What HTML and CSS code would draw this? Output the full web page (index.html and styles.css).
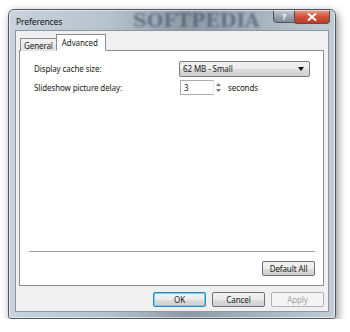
FILE: index.html
```html
<!DOCTYPE html>
<html lang="en">
<head>
<meta charset="UTF-8" />
<title>Preferences</title>
<link rel="stylesheet" href="styles.css">
</head>
<body>

<div class="window">
  <div class="titlebar">
    <span class="title">Preferences</span>
    <span class="watermark">SOFTPEDIA</span>
    <div class="caption-buttons">
      <span class="cap help">?</span>
      <span class="cap close">
        <svg width="10" height="8" viewBox="0 0 10 8"><path d="M1 0.5 L9 7.5 M9 0.5 L1 7.5" stroke="#fff" stroke-width="2"/></svg>
      </span>
    </div>
  </div>

  <div class="client">
    <div class="tabs">
      <span class="tab">General</span>
      <span class="tab active">Advanced</span>
    </div>

    <div class="panel">
      <div class="row">
        <span class="label">Display cache size:</span>
        <div class="combo">
          <span>62 MB - Small</span>
          <svg width="6" height="4" viewBox="0 0 6 4"><path d="M0 0 L6 0 L3 4 Z" fill="#111"/></svg>
        </div>
      </div>
      <div class="row">
        <span class="label">Slideshow picture delay:</span>
        <div class="spin">
          <span class="spin-input">3</span>
          <span class="spin-arrows">
            <svg width="7" height="15" viewBox="0 0 7 15"><path d="M1 6 L3.5 3 L6 6 Z M1 9 L3.5 12 L6 9 Z" fill="#777"/></svg>
          </span>
        </div>
        <span class="unit">seconds</span>
      </div>

      <div class="filler"></div>
      <div class="separator"></div>
      <div class="panel-actions">
        <span class="btn">Default All</span>
      </div>
    </div>

    <div class="dialog-actions">
      <span class="btn focused">OK</span>
      <span class="btn">Cancel</span>
      <span class="btn disabled">Apply</span>
    </div>
  </div>
</div>

</body>
</html>
```

FILE: styles.css
```css
body {
  margin: 0;
  background: #fff;
  font-family: "Noto Sans", Arial, sans-serif;
  font-size: 8px;
  letter-spacing: -0.1px;
  color: #1a1a1a;
}
.window {
  margin: 9px 0 0 8px;
  width: 328px;
  height: 310px;
  box-sizing: border-box;
  border: 1px solid #4e5862;
  border-radius: 6px 6px 3px 3px;
  background: linear-gradient(90deg, #c9d3dc 0%, #b6c2cd 30%, #8d9aa6 55%, #aab6c1 80%, #c2ccd5 100%);
  box-shadow: 2px 3px 8px rgba(0,0,0,0.45);
  display: flex;
  flex-direction: column;
  padding: 0 6px 6px 6px;
  position: relative;
}
.window::after {
  content: "";
  position: absolute;
  left: 0; right: 0; top: 0; bottom: 0;
  border: 1px solid rgba(255,255,255,0.55);
  border-radius: 5px 5px 2px 2px;
  pointer-events: none;
}
.titlebar {
  height: 20px;
  display: flex;
  align-items: center;
  position: relative;
}
.title {
  font-size: 8.5px;
  color: #111;
  padding-left: 1px;
  padding-top: 2px;
  position: relative;
  z-index: 1;
}
.watermark {
  position: absolute;
  left: 118px;
  top: -1px;
  font-family: "DejaVu Serif", serif;
  font-weight: bold;
  font-size: 19px;
  letter-spacing: 0;
  color: rgba(60,78,98,0.6);
  filter: blur(1.2px);
}
.caption-buttons {
  position: absolute;
  right: -1px;
  top: -1px;
  display: flex;
}
.cap {
  height: 14px;
  display: flex;
  align-items: center;
  justify-content: center;
  border: 1px solid #4a525a;
  box-sizing: border-box;
}
.help {
  width: 22px;
  border-radius: 0 0 0 4px;
  background: linear-gradient(#c8d0d8, #9aa6b2 50%, #7e8a96);
  color: #fff;
  font-weight: bold;
  font-size: 9px;
}
.close {
  width: 35px;
  height: 15px;
  border-left: none;
  border-radius: 0 0 4px 0;
  background: linear-gradient(#e8a090, #d0533c 50%, #c03a22);
}
.client {
  flex: 1;
  background: #f0f0f0;
  border: 1px solid #8b96a0;
  display: flex;
  flex-direction: column;
  padding: 3px 4px 4px 3px;
}
.tabs {
  display: flex;
  align-items: flex-end;
  height: 17px;
  margin-bottom: -1px;
  position: relative;
  z-index: 1;
}
.tab {
  border: 1px solid #898c95;
  border-bottom: none;
  background: linear-gradient(#f4f4f4, #e0e0e0);
  padding: 1px 3px 0 3px;
  height: 13px;
  box-sizing: border-box;
  line-height: 11px;
  margin-left: 1px;
}
.tab.active {
  background: #fff;
  height: 17px;
  padding: 2px 7px 0 5px;
  margin-left: -1px;
  border-bottom: 1px solid #fff;
  line-height: 12px;
}
.panel {
  flex: 1;
  background: #fff;
  border: 1px solid #898c95;
  display: flex;
  flex-direction: column;
  padding: 8px 8px 9px 14px;
}
.row {
  display: flex;
  align-items: center;
  height: 19px;
}
.label {
  width: 145px;
}
.combo {
  width: 131px;
  height: 16px;
  box-sizing: border-box;
  border: 1px solid #7c7c7c;
  border-radius: 2px;
  background: linear-gradient(#f2f2f2, #ebebeb 50%, #dddddd 51%, #cfcfcf);
  display: flex;
  align-items: center;
  justify-content: space-between;
  padding: 0 5px 0 3px;
}
.spin {
  display: flex;
  align-items: center;
  margin-left: 1px;
}
.spin-input {
  width: 34px;
  height: 15px;
  box-sizing: border-box;
  border: 1px solid #abadb3;
  border-right-color: #e3e9ef;
  padding-left: 3px;
  line-height: 13px;
}
.spin-arrows {
  display: flex;
  height: 15px;
  width: 9px;
  justify-content: center;
}
.unit {
  margin-left: 5px;
}
.filler {
  flex: 1;
}
.separator {
  height: 1px;
  background: #a0a0a0;
  border-bottom: 1px solid #fff;
  margin: 0 0 8px -5px;
}
.panel-actions {
  display: flex;
  justify-content: flex-end;
}
.btn {
  width: 53px;
  height: 15px;
  box-sizing: border-box;
  border: 1px solid #707070;
  border-radius: 2px;
  background: linear-gradient(#f2f2f2, #ebebeb 50%, #dddddd 51%, #cfcfcf);
  display: flex;
  align-items: center;
  justify-content: center;
}
.btn.focused {
  border-color: #3c7fb1;
  box-shadow: inset 0 0 0 1px #6cd0f5;
}
.btn.disabled {
  border-color: #adb2b5;
  background: #f4f4f4;
  color: #a0a0a0;
}
.dialog-actions {
  display: flex;
  justify-content: flex-end;
  gap: 6px;
  margin-top: 6px;
}
```
